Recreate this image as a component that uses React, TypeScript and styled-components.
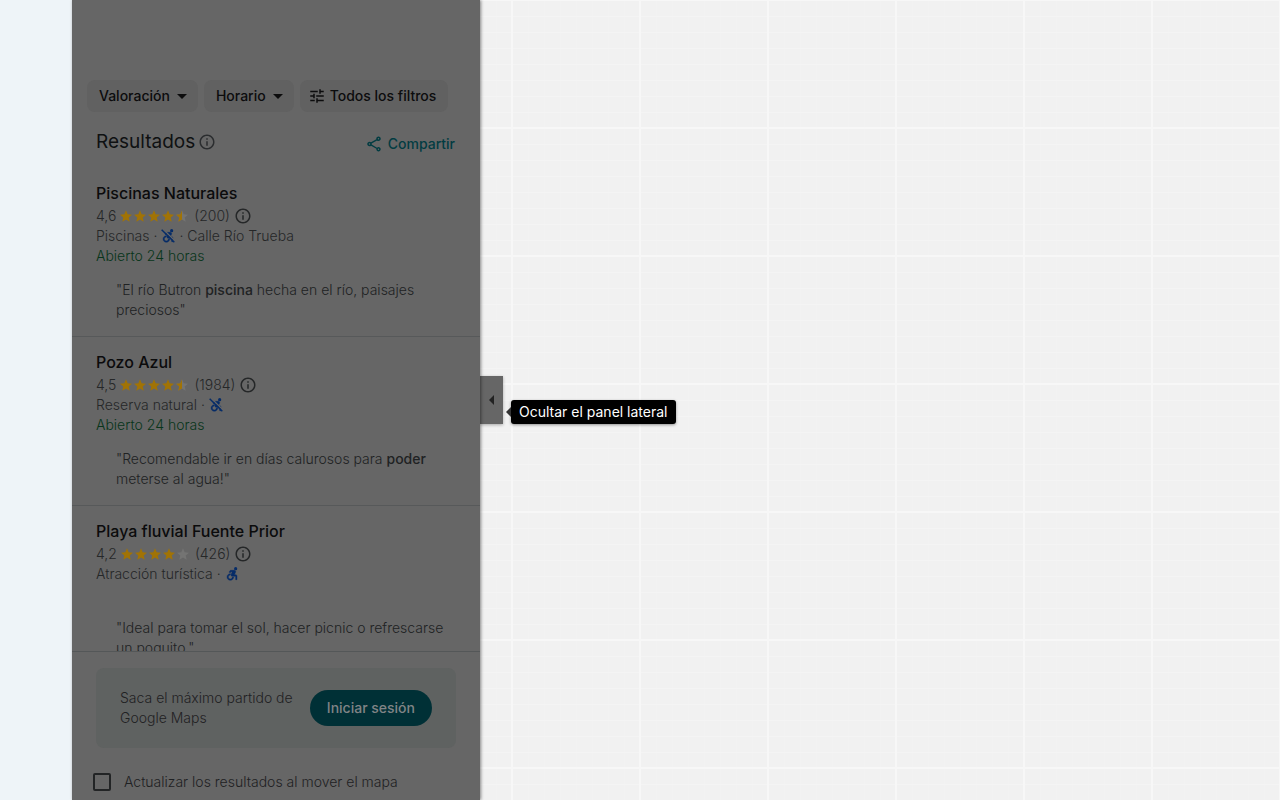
import React from "react";
import styled, { createGlobalStyle } from "styled-components";
import { MdArrowDropDown, MdTune, MdOutlineInfo, MdOutlineShare } from "react-icons/md";

const GlobalStyle = createGlobalStyle`
  * { box-sizing: border-box; }
  body { margin: 0; font-family: Inter, Roboto, "Liberation Sans", sans-serif; color: #1f2123; }
  h1, h2, p, ul { margin: 0; padding: 0; }
  button { font-family: inherit; line-height: 20px; border: 0; margin: 0; cursor: pointer; white-space: nowrap; }
`;

const Page = styled.div`
  display: flex;
  height: 100vh;
  overflow: hidden;
`;

const Rail = styled.nav`
  flex: 0 0 72px;
  background: #eef4f8;
`;

const Panel = styled.section`
  flex: 0 0 408px;
  display: flex;
  flex-direction: column;
  padding-top: 72px;
  background: #666;
  box-shadow: 1px 0 3px rgba(0, 0, 0, 0.45);
  z-index: 1;
`;

const FilterBar = styled.div`
  display: flex;
  gap: 6px;
  padding: 8px 15px;
`;

const FilterButton = styled.button<{ $icon?: boolean }>`
  display: flex;
  align-items: center;
  gap: ${(p) => (p.$icon ? "4px" : "0")};
  height: 32px;
  padding: ${(p) => (p.$icon ? "0 12px 0 8px" : "0 4px 0 12px")};
  border-radius: 8px;
  background: #616161;
  color: #0c0c0d;
  font-size: 14px;
  font-weight: 500;
`;

const Heading = styled.div`
  display: flex;
  align-items: center;
  height: 48px;
  padding: 0 25px 0 24px;
  color: #2b2d2f;
`;

const TitleGroup = styled.div`
  display: flex;
  align-items: center;
  gap: 3px;
  padding-bottom: 4px;
`;

const Title = styled.h1`
  color: #0f1112;
  font-size: 19px;
  font-weight: 400;
  line-height: 28px;
`;

const ShareButton = styled.button`
  display: flex;
  align-items: center;
  gap: 5px;
  margin-left: auto;
  padding: 0;
  background: none;
  color: #023c42;
  font-size: 14px;
  font-weight: 500;
`;

const Results = styled.ul`
  flex: 1;
  min-height: 0;
  overflow: hidden;
  list-style: none;
`;

const Result = styled.li`
  height: 169px;
  padding: 15px 24px 0;
  border-bottom: 1px solid #57595a;
`;

const Name = styled.h2`
  margin-bottom: 3px;
  color: #0b0b0c;
  font-size: 16px;
  font-weight: 500;
  line-height: 20px;
`;

const Line = styled.p<{ $open?: boolean }>`
  display: flex;
  align-items: center;
  gap: 4px;
  height: 20px;
  color: ${(p) => (p.$open ? "#08351a" : "#252728")};
  font-size: 14px;
  font-weight: 300;
  line-height: 20px;
  white-space: nowrap;
`;

const Stars = styled.span`
  display: flex;
  gap: 2px;
  margin-right: 2px;
`;

const Access = styled.svg`
  color: #062c68;
`;

const Quote = styled.p`
  margin-top: 14px;
  padding-left: 20px;
  color: #202223;
  font-size: 14px;
  font-weight: 300;
  line-height: 20px;

  b { font-weight: 500; }
`;

const Footer = styled.footer`
  padding: 16px 24px 8px;
  border-top: 1px solid #545758;
  font-weight: 300;
`;

const SignIn = styled.div`
  display: flex;
  align-items: center;
  justify-content: space-between;
  height: 80px;
  padding: 0 24px;
  border-radius: 8px;
  background: #5f6261;
  font-size: 14px;
  line-height: 20px;
`;

const SignInButton = styled.button`
  flex: none;
  height: 36px;
  padding: 0 17px;
  border-radius: 18px;
  background: #003036;
  color: #808486;
  font-size: 14px;
  font-weight: 500;
`;

const Update = styled.label`
  display: flex;
  align-items: center;
  gap: 13px;
  height: 20px;
  margin-top: 24px;
  margin-left: -3px;
  font-size: 14px;
  line-height: 20px;
  white-space: nowrap;
`;

const Checkbox = styled.input`
  appearance: none;
  width: 18px;
  height: 18px;
  margin: 0;
  border: 2px solid #222425;
  border-radius: 2px;
`;

const MapArea = styled.main`
  position: relative;
  flex: 1;
  display: flex;
  align-items: center;
  background-color: #f1f1f1;
  background-image:
    linear-gradient(#f7f7f7 2px, transparent 2px),
    linear-gradient(90deg, #f7f7f7 2px, transparent 2px),
    linear-gradient(#f4f4f4 1px, transparent 1px),
    linear-gradient(90deg, #f2f2f2 1px, transparent 1px);
  background-size: 128px 128px, 128px 128px, 16px 16px, 16px 16px;
  background-position: 0 -1px, 31px 0, 0 0, 0 0;
`;

const Collapse = styled.button`
  display: flex;
  align-items: center;
  justify-content: center;
  width: 23px;
  height: 48px;
  padding: 0;
  background: #666;
  box-shadow: 0 1px 3px rgba(0, 0, 0, 0.3);
`;

const Tooltip = styled.div`
  position: absolute;
  left: 31px;
  top: 50%;
  height: 24px;
  padding: 0 8px;
  border-radius: 3px;
  background: #000;
  color: #fff;
  box-shadow: 0 1px 3px rgba(0, 0, 0, 0.4);
  font-size: 14px;
  line-height: 24px;
  white-space: nowrap;

  &::before {
    content: "";
    position: absolute;
    left: -5px;
    top: 7px;
    border: 5px solid transparent;
    border-left: 0;
    border-right-color: #333;
  }
`;

const Accessibility = ({ crossed }: { crossed: boolean }) => (
  <Access width="14" height="14" viewBox="2 2 21 21" role="img" aria-label={crossed ? "No accesible" : "Accesible"}>
    <circle cx="18" cy="4.5" r="2.4" fill="currentColor" />
    <path
      fill="currentColor"
      stroke="currentColor"
      strokeWidth="0.6"
      d="M15 17h-2c0 1.65-1.35 3-3 3s-3-1.35-3-3 1.35-3 3-3v-2c-2.76 0-5 2.24-5 5s2.24 5 5 5 5-2.24 5-5zm3-3.5h-1.86l1.67-3.67C18.42 8.5 17.44 7 15.96 7h-5.2c-.81 0-1.54.47-1.87 1.2L8.22 10l1.92.53.65-1.53H13l-1.83 4.1c-.6 1.33.39 2.9 1.85 2.9H18v5h2v-5.5c0-1.1-.9-2-2-2z"
    />
    {crossed && (
      <>
        <path d="M5 2L23 20" stroke="#666" strokeWidth="2" />
        <path d="M3 3L22 22" stroke="currentColor" strokeWidth="2.2" />
      </>
    )}
  </Access>
);

const STAR = "M12 17.27 18.18 21l-1.64-7.03L22 9.24l-7.19-.61L12 2 9.19 8.63 2 9.24l5.46 4.73L5.82 21z";
const LEFT_HALF = "M12 2 9.19 8.63 2 9.24l5.46 4.73L5.82 21 12 17.27z";

const Rating = ({ value }: { value: number }) => (
  <Stars>
    {[0, 1, 2, 3, 4].map((i) => (
      <svg key={i} width="12" height="12" viewBox="2 1.5 20 20">
        <path d={STAR} fill={value >= i + 1 ? "#a17305" : "#747473"} />
        {value > i && value < i + 1 && <path d={LEFT_HALF} fill="#a17305" />}
      </svg>
    ))}
  </Stars>
);

const places = [
  { name: "Piscinas Naturales", score: "4,6", stars: 4.5, votes: "(200)", kind: "Piscinas", crossed: true, street: "Calle Río Trueba", hours: "Abierto 24 horas", quote: <>"El río Butron <b>piscina</b> hecha en el río, paisajes preciosos"</> },
  { name: "Pozo Azul", score: "4,5", stars: 4.5, votes: "(1984)", kind: "Reserva natural", crossed: true, street: "", hours: "Abierto 24 horas", quote: <>"Recomendable ir en días calurosos para <b>poder</b> meterse al agua!"</> },
  { name: "Playa fluvial Fuente Prior", score: "4,2", stars: 4, votes: "(426)", kind: "Atracción turística", crossed: false, street: "", hours: "", quote: <>"Ideal para tomar el sol, hacer picnic o refrescarse un poquito."</> },
];

export default function App() {
  return (
    <Page>
      <GlobalStyle />
      <Rail />
      <Panel>
        <FilterBar>
          <FilterButton>Valoración<MdArrowDropDown size={24} /></FilterButton>
          <FilterButton>Horario<MdArrowDropDown size={24} /></FilterButton>
          <FilterButton $icon><MdTune size={18} />Todos los filtros</FilterButton>
        </FilterBar>
        <Heading>
          <TitleGroup>
            <Title>Resultados</Title>
            <MdOutlineInfo size={18} />
          </TitleGroup>
          <ShareButton><MdOutlineShare size={18} /> Compartir</ShareButton>
        </Heading>
        <Results>
          {places.map((p) => (
            <Result key={p.name}>
              <Name>{p.name}</Name>
              <Line>{p.score} <Rating value={p.stars} /> {p.votes} <MdOutlineInfo size={18} /></Line>
              <Line>{p.kind} · <Accessibility crossed={p.crossed} /> {p.street && `· ${p.street}`}</Line>
              <Line $open>{p.hours}</Line>
              <Quote>{p.quote}</Quote>
            </Result>
          ))}
        </Results>
        <Footer>
          <SignIn>
            <p>Saca el máximo partido de<br />Google Maps</p>
            <SignInButton>Iniciar sesión</SignInButton>
          </SignIn>
          <Update><Checkbox type="checkbox" /> Actualizar los resultados al mover el mapa</Update>
        </Footer>
      </Panel>
      <MapArea>
        <Collapse aria-label="Ocultar el panel lateral">
          <svg width="6" height="10" viewBox="0 0 6 10"><path d="M5 0v10L0 5z" fill="#222" /></svg>
        </Collapse>
        <Tooltip role="tooltip">Ocultar el panel lateral</Tooltip>
      </MapArea>
    </Page>
  );
}
